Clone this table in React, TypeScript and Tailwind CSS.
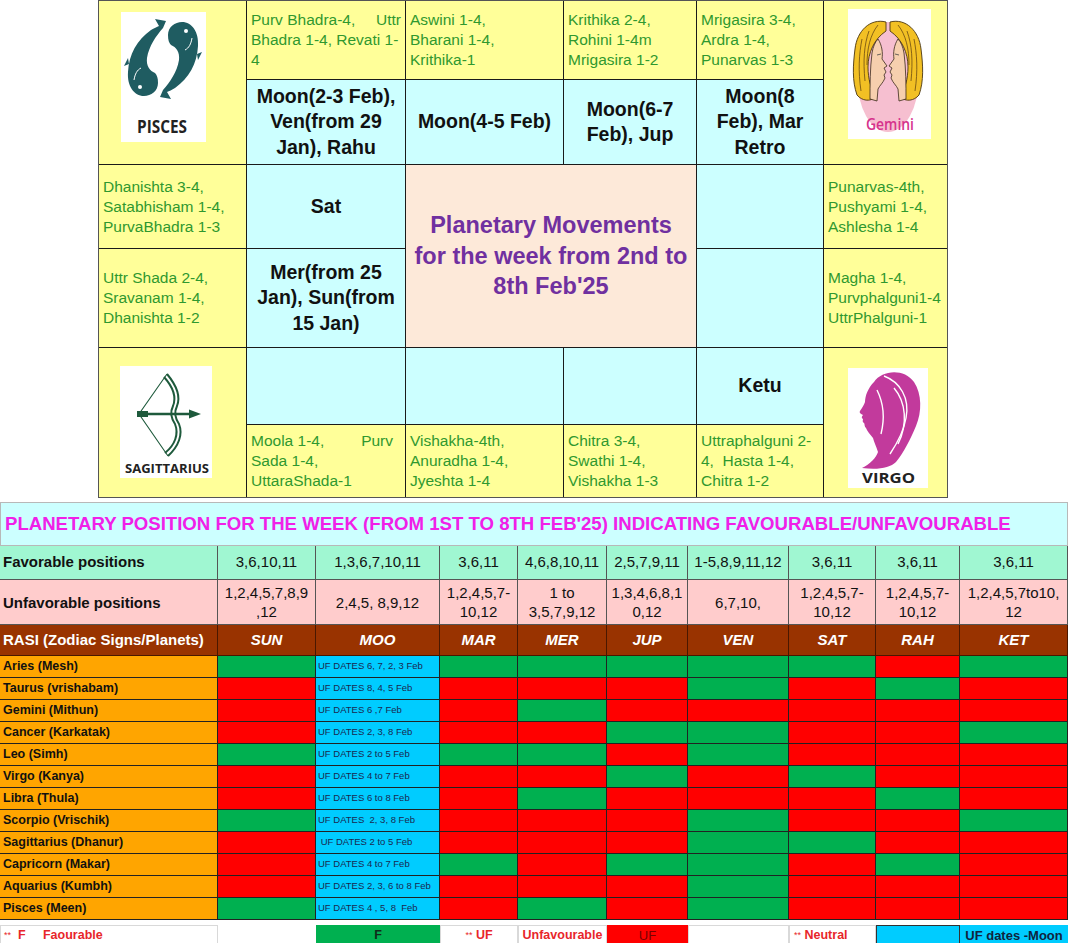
import React from "react";

type Line = string | [string, string];

function Nak({ lines, pos, pr = "pr-1" }: { lines: Line[]; pos: string; pr?: string }) {
  return (
    <div className={`${pos} bg-[#ffff99] flex flex-col justify-center pl-1 ${pr} text-[15.5px] leading-[20px] text-[#2f982f] whitespace-pre`}>
      {lines.map((l, i) =>
        Array.isArray(l) ? (
          <div key={i} className="flex justify-between">
            <span>{l[0]}</span>
            <span>{l[1]}</span>
          </div>
        ) : (
          <div key={i}>{l}</div>
        )
      )}
    </div>
  );
}

function Planet({ lines, pos }: { lines: string[]; pos: string }) {
  return (
    <div className={`${pos} bg-[#ccffff] flex flex-col items-center justify-center text-center font-bold text-[19.5px] leading-[25.5px] text-[#111]`}>
      {lines.map((l, i) => (
        <div key={i}>{l}</div>
      ))}
    </div>
  );
}

function PiscesLogo() {
  const fish =
    "M47 23 C47 15 54 10 61 10 C71 10 78 20 77 34 C76 52 68 66 54 76 C51 78 48 79 46 80 L50 87 L39 85 L42 78 C49 70 56 60 58 48 C59 40 55 35 50 33 C48 31 47 28 47 23 Z";
  return (
    <svg width="85" height="130" viewBox="0 0 85 130" className="block bg-white">
      <g fill="#1f5c61">
        <path d={fish} />
        <path d={fish} transform="rotate(180 42 47)" />
        <path d="M76 42 L81 40 L77 48 Z" />
        <path d="M8 52 L3 54 L7 46 Z" />
      </g>
      <circle cx="65" cy="19" r="2" fill="#fff" />
      <circle cx="19" cy="75" r="2" fill="#fff" />
      <g fill="none" stroke="#fff" strokeWidth="1">
        <path d="M71 26 C70 32 68 36 64 38" />
        <path d="M13 68 C14 62 16 58 20 56" />
      </g>
      <text x="16" y="121" fontSize="17" fontWeight="700" fill="#222" textLength="50" lengthAdjust="spacingAndGlyphs" fontFamily="'Open Sans', sans-serif">
        PISCES
      </text>
    </svg>
  );
}

function GeminiHalf() {
  return (
    <g>
      <path
        d="M38 13 C22 9 9 22 7 40 C5 56 4 72 9 86 C14 92 22 93 28 88 C23 80 20 70 20 58 C20 44 26 30 38 22 Z"
        fill="#f2c024"
        stroke="#4a3510"
        strokeWidth="0.9"
      />
      <path
        d="M30 30 C34 36 35 44 34 50 L39 57 L36 59 L38 63 L36 66 L37 69 C35 74 32 76 30 80 L29 92 L22 90 C22 76 22 60 24 44 C25 38 27 33 30 30 Z"
        fill="#f6cfae"
        stroke="#3a2a1a"
        strokeWidth="0.8"
      />
      <g fill="none" stroke="#6b4a12" strokeWidth="0.8">
        <path d="M14 30 C11 45 10 62 13 82" />
        <path d="M21 22 C16 36 15 52 17 72" />
        <path d="M30 16 C22 26 19 40 19 56" />
      </g>
      <path d="M29 46 L33 45" stroke="#444" strokeWidth="0.8" />
    </g>
  );
}

function GeminiLogo() {
  return (
    <svg width="83" height="130" viewBox="0 0 83 130" className="block bg-white">
      <ellipse cx="40" cy="68" rx="31" ry="55" fill="#f6bfd0" />
      <GeminiHalf />
      <g transform="translate(80 0) scale(-1 1)">
        <GeminiHalf />
      </g>
      <text x="18" y="121" fontSize="16" fontWeight="600" fill="#d6338c" textLength="48" lengthAdjust="spacingAndGlyphs" fontFamily="'Open Sans', sans-serif">
        Gemini
      </text>
    </svg>
  );
}

function SagittariusLogo() {
  return (
    <svg width="92" height="112" viewBox="0 0 92 112" className="block bg-white">
      <g fill="none" stroke="#1e5a3c" strokeWidth="2">
        <path d="M47 8 C57 20 61 30 57 40 C54 46 55 52 59 58 C63 68 59 80 48 90" />
        <path d="M44 11 C53 21 57 30 53 40 C50 46 51 52 55 58 C59 68 55 79 45 87" />
        <path d="M47 8 L19 48 L48 90" strokeWidth="1.1" />
      </g>
      <path d="M26 48 L72 48" stroke="#1e5a3c" strokeWidth="2.6" />
      <path d="M69 43.5 L81 48 L69 52.5 Z" fill="#1e5a3c" />
      <rect x="17" y="45" width="11" height="6" fill="#1e5a3c" />
      <text x="5" y="107" fontSize="13" fontWeight="700" fill="#222" textLength="84" lengthAdjust="spacingAndGlyphs" fontFamily="'Open Sans', sans-serif">
        SAGITTARIUS
      </text>
    </svg>
  );
}

function VirgoLogo() {
  return (
    <svg width="80" height="120" viewBox="0 0 80 120" className="block bg-white">
      <path
        fill="#c23a9c"
        d="M26 14 C34 2 56 0 66 14 C74 26 74 44 68 58 C62 72 56 84 48 94 C42 100 30 102 14 100 C22 96 28 90 30 84 C28 78 26 74 25 70 C22 66 19 63 18 60 C16 58 17 56 16 55 C14 54 15 52 15 51 C13 50 14 48 15 47 C12 46 11 44 12 43 C14 40 16 37 17 34 C17 28 20 20 26 14 Z"
      />
      <g stroke="#fff" strokeWidth="1.4" fill="none">
        <path d="M36 8 C52 14 62 30 58 50 C56 62 50 74 42 86" />
        <path d="M29 22 C35 34 37 50 33 66" />
        <path d="M46 20 C58 34 60 56 50 76" />
      </g>
      <text x="14" y="115" fontSize="15" fontWeight="700" fill="#222" textLength="53" lengthAdjust="spacingAndGlyphs" fontFamily="'Open Sans', sans-serif">
        VIRGO
      </text>
    </svg>
  );
}

function Chart() {
  return (
    <div className="ml-[98px] w-[850px] grid grid-cols-[147px_158px_157px_132px_126px_123px] grid-rows-[78px_84px_83px_98px_76px_72px] gap-px bg-[#1a1a1a] border border-[#555]">
      <div className="col-start-1 row-start-1 row-span-2 bg-[#ffff99] pl-[22px] pt-[11px]">
        <PiscesLogo />
      </div>
      <Nak pos="col-start-2 row-start-1" lines={[["Purv Bhadra-4,", "Uttr"], "Bhadra 1-4, Revati 1-", "4"]} />
      <Nak pos="col-start-3 row-start-1" lines={["Aswini 1-4,", "Bharani 1-4,", "Krithika-1"]} />
      <Nak pos="col-start-4 row-start-1" lines={["Krithika 2-4,", "Rohini 1-4m", "Mrigasira 1-2"]} />
      <Nak pos="col-start-5 row-start-1" lines={["Mrigasira 3-4,", "Ardra 1-4,", "Punarvas 1-3"]} />
      <div className="col-start-6 row-start-1 row-span-2 bg-[#ffff99] pl-[24px] pt-[8px]">
        <GeminiLogo />
      </div>

      <Planet pos="col-start-2 row-start-2" lines={["Moon(2-3 Feb),", "Ven(from 29", "Jan), Rahu"]} />
      <Planet pos="col-start-3 row-start-2" lines={["Moon(4-5 Feb)"]} />
      <Planet pos="col-start-4 row-start-2" lines={["Moon(6-7", "Feb), Jup"]} />
      <Planet pos="col-start-5 row-start-2" lines={["Moon(8", "Feb), Mar", "Retro"]} />

      <Nak pos="col-start-1 row-start-3" lines={["Dhanishta 3-4,", "Satabhisham 1-4,", "PurvaBhadra 1-3"]} />
      <Planet pos="col-start-2 row-start-3" lines={["Sat"]} />
      <div className="col-start-3 col-span-2 row-start-3 row-span-2 bg-[#fde9d9] flex flex-col items-center justify-center text-center font-bold text-[23.5px] leading-[30.5px] text-[#7030a0]">
        <div>Planetary Movements</div>
        <div>for the week from 2nd to</div>
        <div>8th Feb'25</div>
      </div>
      <div className="col-start-5 row-start-3 bg-[#ccffff]" />
      <Nak pos="col-start-6 row-start-3" lines={["Punarvas-4th,", "Pushyami 1-4,", "Ashlesha 1-4"]} />

      <Nak pos="col-start-1 row-start-4" lines={["Uttr Shada 2-4,", "Sravanam 1-4,", "Dhanishta 1-2"]} />
      <Planet pos="col-start-2 row-start-4" lines={["Mer(from 25", "Jan), Sun(from", "15 Jan)"]} />
      <div className="col-start-5 row-start-4 bg-[#ccffff]" />
      <Nak pos="col-start-6 row-start-4" lines={["Magha 1-4,", "Purvphalguni1-4", "UttrPhalguni-1"]} />

      <div className="col-start-1 row-start-5 row-span-2 bg-[#ffff99] pl-[21px] pt-[18px]">
        <SagittariusLogo />
      </div>
      <div className="col-start-2 row-start-5 bg-[#ccffff]" />
      <div className="col-start-3 row-start-5 bg-[#ccffff]" />
      <div className="col-start-4 row-start-5 bg-[#ccffff]" />
      <Planet pos="col-start-5 row-start-5" lines={["Ketu"]} />
      <div className="col-start-6 row-start-5 row-span-2 bg-[#ffff99] pl-[24px] pt-[20px]">
        <VirgoLogo />
      </div>

      <Nak pos="col-start-2 row-start-6" pr="pr-[12px]" lines={[["Moola 1-4,", "Purv"], "Sada 1-4,", "UttaraShada-1"]} />
      <Nak pos="col-start-3 row-start-6" lines={["Vishakha-4th,", "Anuradha 1-4,", "Jyeshta 1-4"]} />
      <Nak pos="col-start-4 row-start-6" lines={["Chitra 3-4,", "Swathi 1-4,", "Vishakha 1-3"]} />
      <Nak pos="col-start-5 row-start-6" lines={["Uttraphalguni 2-", "4,  Hasta 1-4,", "Chitra 1-2"]} />
    </div>
  );
}

const COLS = "grid grid-cols-[218px_98px_124px_78px_89px_81px_101px_87px_84px_108px]";
const PLANETS = ["SUN", "MOO", "MAR", "MER", "JUP", "VEN", "SAT", "RAH", "KET"];
const FAV = ["3,6,10,11", "1,3,6,7,10,11", "3,6,11", "4,6,8,10,11", "2,5,7,9,11", "1-5,8,9,11,12", "3,6,11", "3,6,11", "3,6,11"];
const UNFAV = [
  ["1,2,4,5,7,8,9", ",12"],
  ["2,4,5, 8,9,12"],
  ["1,2,4,5,7-", "10,12"],
  ["1 to", "3,5,7,9,12"],
  ["1,3,4,6,8,1", "0,12"],
  ["6,7,10,"],
  ["1,2,4,5,7-", "10,12"],
  ["1,2,4,5,7-", "10,12"],
  ["1,2,4,5,7to10,", "12"],
];

// order of c: SUN MAR MER JUP VEN SAT RAH KET
const RASI = [
  { name: "Aries (Mesh)", moon: "UF DATES 6, 7, 2, 3 Feb", c: "GGGGGGRG" },
  { name: "Taurus (vrishabam)", moon: "UF DATES 8, 4, 5 Feb", c: "RRRRGRGR" },
  { name: "Gemini (Mithun)", moon: "UF DATES 6 ,7 Feb", c: "RRGRRRRR" },
  { name: "Cancer (Karkatak)", moon: "UF DATES 2, 3, 8 Feb", c: "RRRGGRRG" },
  { name: "Leo (Simh)", moon: "UF DATES 2 to 5 Feb", c: "GGGRGRRR" },
  { name: "Virgo (Kanya)", moon: "UF DATES 4 to 7 Feb", c: "RRRGRGRR" },
  { name: "Libra (Thula)", moon: "UF DATES 6 to 8 Feb", c: "RRGRRRGR" },
  { name: "Scorpio (Vrischik)", moon: "UF DATES  2, 3, 8 Feb", c: "GRRRGRRG" },
  { name: "Sagittarius (Dhanur)", moon: " UF DATES 2 to 5 Feb", c: "RRRRGGRR" },
  { name: "Capricorn (Makar)", moon: "UF DATES 4 to 7 Feb", c: "RGRGGRGR" },
  { name: "Aquarius (Kumbh)", moon: "UF DATES 2, 3, 6 to 8 Feb", c: "RRRRGRRR" },
  { name: "Pisces (Meen)", moon: "UF DATES 4 , 5, 8  Feb", c: "GRGRGRRR" },
];

function Colour({ v }: { v: string }) {
  return <div className={`border-r border-b border-[#222] ${v === "G" ? "bg-[#00b050]" : "bg-[#ff0000]"}`} />;
}

function Table() {
  return (
    <div className="mt-[4px] w-[1068px] text-[#111]">
      <div className="h-[44px] bg-[#ccffff] border border-[#b8b8b8] flex items-center pl-[4px] font-bold text-[18.6px] text-[#f020e8] whitespace-nowrap">
        PLANETARY POSITION FOR THE WEEK (FROM 1ST TO 8TH FEB'25) INDICATING FAVOURABLE/UNFAVOURABLE
      </div>

      <div className={`${COLS} h-[34px] bg-[#a0f7d2] text-[15px]`}>
        <div className="border-r border-b border-[#555] flex items-center pl-[3px] font-bold">Favorable positions</div>
        {FAV.map((f, i) => (
          <div key={i} className="border-r border-b border-[#555] flex items-center justify-center whitespace-nowrap">
            {f}
          </div>
        ))}
      </div>

      <div className={`${COLS} h-[45px] bg-[#ffcccc] text-[15px] leading-[19px]`}>
        <div className="border-r border-b border-[#555] flex items-center pl-[3px] font-bold">Unfavorable positions</div>
        {UNFAV.map((u, i) => (
          <div key={i} className="border-r border-b border-[#555] flex flex-col items-center justify-center text-center whitespace-nowrap">
            {u.map((l, j) => (
              <div key={j}>{l}</div>
            ))}
          </div>
        ))}
      </div>

      <div className={`${COLS} h-[31px] bg-[#993300] text-white text-[15px] font-bold`}>
        <div className="border-r border-b border-[#4a1800] flex items-center pl-[3px]">RASI (Zodiac Signs/Planets)</div>
        {PLANETS.map((p) => (
          <div key={p} className="border-r border-b border-[#4a1800] flex items-center justify-center italic">
            {p}
          </div>
        ))}
      </div>

      {RASI.map((r) => (
        <div key={r.name} className={`${COLS} h-[22px]`}>
          <div className="bg-[#ffa500] border-r border-b border-[#222] flex items-center pl-[3px] font-bold text-[12.5px]">{r.name}</div>
          <Colour v={r.c[0]} />
          <div className="bg-[#00ccff] border-r border-b border-[#222] flex items-center pl-[2px] text-[9.5px] text-[#1b2850] whitespace-pre">
            {r.moon}
          </div>
          {r.c
            .slice(1)
            .split("")
            .map((v, i) => (
              <Colour key={i} v={v} />
            ))}
        </div>
      ))}

      <div className={`${COLS} h-[18px] mt-[5px] text-[12.5px] font-bold text-[#e8262a]`}>
        <div className="border border-[#d9d9d9] flex items-center pl-[3px] whitespace-pre">
          <span className="text-[9px] font-normal">**</span>
          {"  F     Faourable"}
        </div>
        <div />
        <div className="bg-[#00b050] flex items-center justify-center text-[#102a1a]">F</div>
        <div className="border border-[#d9d9d9] flex items-center justify-center whitespace-pre">
          <span className="text-[9px] font-normal">**</span>
          {" UF"}
        </div>
        <div className="border border-[#d9d9d9] flex items-center justify-center">Unfavourable</div>
        <div className="bg-[#ff0000] flex items-center justify-center font-normal text-[13px] text-[#7a0000]">UF</div>
        <div className="border border-[#d9d9d9]" />
        <div className="border border-[#d9d9d9] flex items-center pl-[4px] whitespace-pre">
          <span className="text-[9px] font-normal">**</span>
          {" Neutral"}
        </div>
        <div className="bg-[#00ccff] border border-[#333]" />
        <div className="bg-[#00ccff] flex items-center justify-center text-[13px] text-[#10233d]">UF dates -Moon</div>
      </div>
    </div>
  );
}

export default function App() {
  return (
    <div className="w-[1068px] h-[943px] overflow-hidden bg-white font-['Liberation_Sans',Arial,sans-serif]">
      <Chart />
      <Table />
    </div>
  );
}
